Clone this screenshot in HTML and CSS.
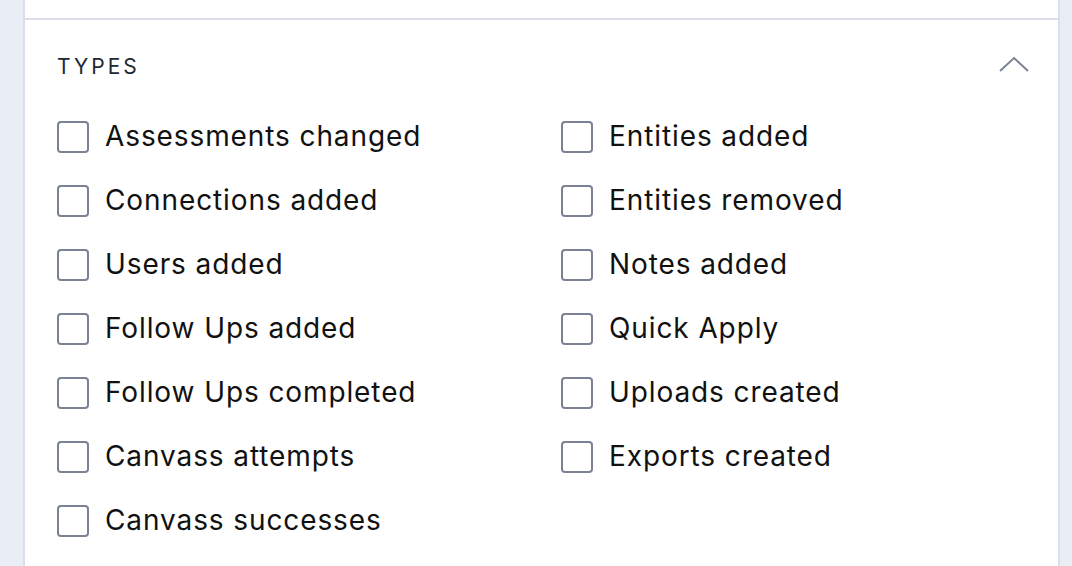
FILE: index.html
```html
<!DOCTYPE html>
<html>
<head>
<meta charset="utf-8">
<link rel="stylesheet" href="styles.css">
</head>
<body>
<div class="panel">
  <div class="top"></div>
  <section class="types">
    <div class="head">
      <h2 class="title">TYPES</h2>
      <svg class="chev" width="32" height="18" viewBox="0 0 32 18"><path d="M2 16 L16 3 L30 16" fill="none" stroke="#7b8294" stroke-width="2"/></svg>
    </div>
    <div class="grid">
      <label class="item"><span class="box"></span><span class="txt">Assessments changed</span></label>
      <label class="item"><span class="box"></span><span class="txt">Entities added</span></label>
      <label class="item"><span class="box"></span><span class="txt">Connections added</span></label>
      <label class="item"><span class="box"></span><span class="txt">Entities removed</span></label>
      <label class="item"><span class="box"></span><span class="txt">Users added</span></label>
      <label class="item"><span class="box"></span><span class="txt">Notes added</span></label>
      <label class="item"><span class="box"></span><span class="txt">Follow Ups added</span></label>
      <label class="item"><span class="box"></span><span class="txt">Quick Apply</span></label>
      <label class="item"><span class="box"></span><span class="txt">Follow Ups completed</span></label>
      <label class="item"><span class="box"></span><span class="txt">Uploads created</span></label>
      <label class="item"><span class="box"></span><span class="txt">Canvass attempts</span></label>
      <label class="item"><span class="box"></span><span class="txt">Exports created</span></label>
      <label class="item"><span class="box"></span><span class="txt">Canvass successes</span></label>
    </div>
  </section>
</div>
</body>
</html>
```

FILE: styles.css
```css
html, body {
  margin: 0;
  padding: 0;
  background: #e9edf6;
  height: 566px;
  overflow: hidden;
}
body {
  font-family: Inter, "Liberation Sans", sans-serif;
  color: #1a1a1a;
  font-variant-ligatures: none;
}
.panel {
  margin: 0 12px 0 23px;
  background: #fff;
  border-left: 2px solid #dcdfeb;
  border-right: 2px solid #dcdfeb;
  height: 566px;
}
.top {
  height: 18px;
  border-bottom: 2px solid #dcdfeb;
}
.types {
  padding: 0 28px 0 32px;
}
.head {
  display: flex;
  justify-content: space-between;
  align-items: center;
  height: 92px;
}
.title {
  margin: 0;
  font-size: 21px;
  font-weight: 400;
  letter-spacing: 3px;
  color: #222831;
}
.chev {
  margin-top: -4px;
}
.grid {
  display: grid;
  grid-template-columns: 504px 1fr;
  grid-auto-rows: 64px;
}
.item {
  display: flex;
  align-items: center;
  height: 50px;
  font-size: 28px;
  letter-spacing: 0.9px;
  color: #111;
}
.txt {
  padding-bottom: 2px;
}
.box {
  width: 28px;
  height: 28px;
  border: 2px solid #7b8294;
  border-radius: 4px;
  margin-right: 16px;
  flex: none;
}
```
